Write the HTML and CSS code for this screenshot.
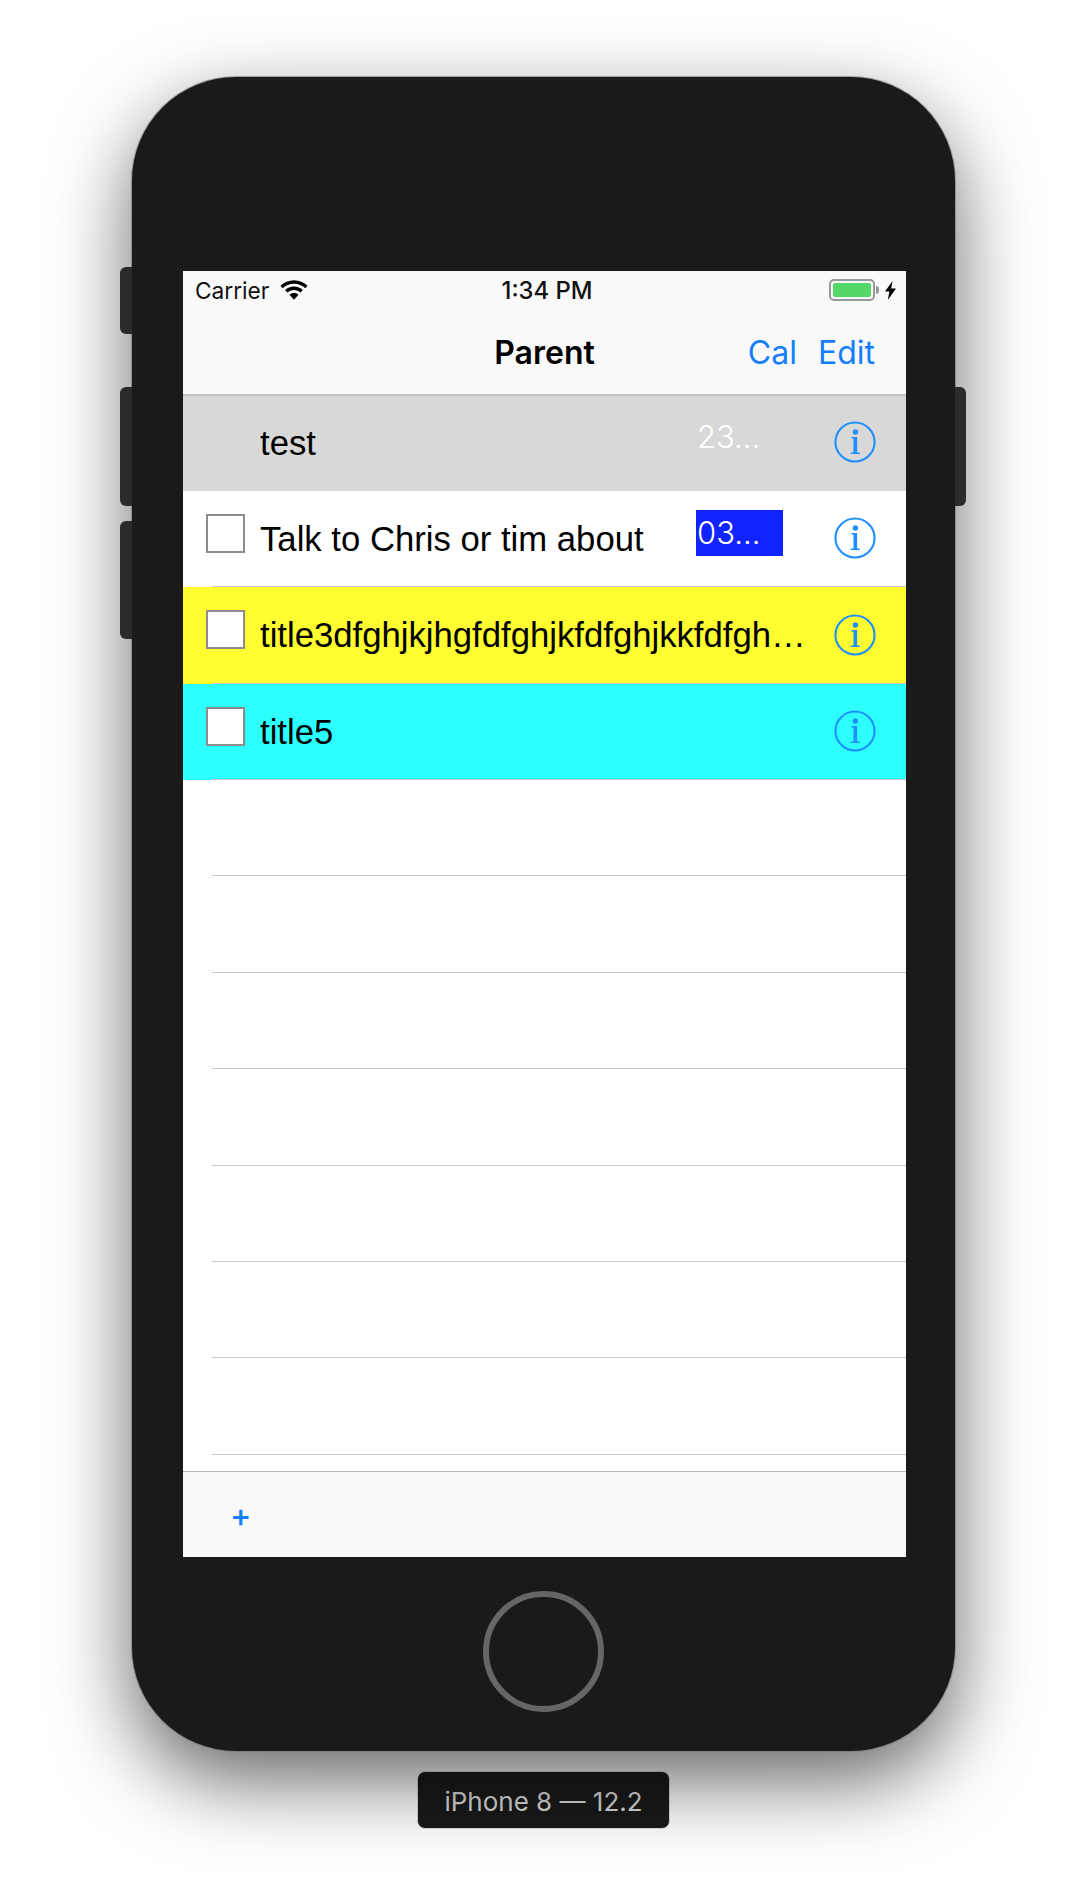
FILE: index.html
```html
<!DOCTYPE html>
<html lang="en">
<head>
    <meta charset="UTF-8">
    <title>iPhone 8 — 12.2</title>
    <link rel="stylesheet" href="styles.css">
</head>
<body>
    <div class="phone">
        <span class="side vol-mute"></span>
        <span class="side vol-up"></span>
        <span class="side vol-down"></span>
        <span class="side power"></span>

        <div class="screen">
            <div class="status">
                <div class="status-left">
                    <span>Carrier</span>
                    <svg class="wifi" width="28" height="20" viewBox="0 0 27 19">
                        <path d="M13.5 0C8.4 0 3.9 2 .4 5.3l2.2 2.4C5.500 5 9.300 3.400 13.500 3.400S21.500 5 24.400 7.700l2.200-2.400C23.100 2 18.600 0 13.500 0z"/>
                        <path d="M13.500 6.200c-3.300 0-6.300 1.300-8.600 3.400l2.300 2.400c1.700-1.500 3.900-2.500 6.300-2.500s4.600 1 6.300 2.500l2.300-2.400c-2.300-2.100-5.300-3.400-8.600-3.400z"/>
                        <path d="M13.500 12.400c-1.700 0-3.200.6-4.300 1.700l4.300 4.700 4.300-4.700c-1.100-1.100-2.600-1.700-4.300-1.700z"/>
                    </svg>
                </div>
                <div class="time">1:34 PM</div>
                <div class="status-right">
                    <span class="battery"><span class="battery-fill"></span></span>
                    <span class="battery-nub"></span>
                    <svg class="bolt" width="11" height="19" viewBox="0 0 11 19">
                        <path d="M7.500 0L0 10.500h4.400L2.800 19 11 7.500H6.200z"/>
                    </svg>
                </div>
            </div>

            <div class="nav">
                <div></div>
                <div class="nav-title">Parent</div>
                <div class="nav-actions">
                    <span>Cal</span>
                    <span>Edit</span>
                </div>
            </div>

            <div class="list">
                <div class="row row-grey">
                    <div class="row-body">
                        <span class="check check-none"></span>
                        <span class="title">test</span>
                        <span class="date">23...</span>
                        <svg class="info" width="42" height="42" viewBox="0 0 44 44">
                            <circle cx="22" cy="22" r="20.500"/>
                            <circle class="info-i" cx="22.400" cy="11.500" r="2.800"/>
                            <path class="info-i" d="M18.300 16.800h5.900V33h2.800v1.500H17.500V33h2.900V18.300h-2.100z"/>
                        </svg>
                    </div>
                </div>
                <div class="row">
                    <div class="row-body">
                        <span class="check"></span>
                        <span class="title">Talk to Chris or tim about</span>
                        <span class="date date-blue">03...</span>
                        <svg class="info" width="42" height="42" viewBox="0 0 44 44">
                            <circle cx="22" cy="22" r="20.500"/>
                            <circle class="info-i" cx="22.400" cy="11.500" r="2.800"/>
                            <path class="info-i" d="M18.300 16.800h5.900V33h2.800v1.500H17.500V33h2.900V18.300h-2.100z"/>
                        </svg>
                    </div>
                </div>
                <div class="row row-yellow">
                    <div class="row-body">
                        <span class="check"></span>
                        <span class="title">title3dfghjkjhgfdfghjkfdfghjkkfdfgh…</span>
                        <svg class="info" width="42" height="42" viewBox="0 0 44 44">
                            <circle cx="22" cy="22" r="20.500"/>
                            <circle class="info-i" cx="22.400" cy="11.500" r="2.800"/>
                            <path class="info-i" d="M18.300 16.800h5.900V33h2.800v1.500H17.500V33h2.900V18.300h-2.100z"/>
                        </svg>
                    </div>
                </div>
                <div class="row row-cyan">
                    <div class="row-body">
                        <span class="check"></span>
                        <span class="title">title5</span>
                        <svg class="info" width="42" height="42" viewBox="0 0 44 44">
                            <circle cx="22" cy="22" r="20.500"/>
                            <circle class="info-i" cx="22.400" cy="11.500" r="2.800"/>
                            <path class="info-i" d="M18.300 16.800h5.900V33h2.800v1.500H17.500V33h2.900V18.300h-2.100z"/>
                        </svg>
                    </div>
                </div>
                <div class="row"><div class="row-body"></div></div>
                <div class="row"><div class="row-body"></div></div>
                <div class="row"><div class="row-body"></div></div>
                <div class="row"><div class="row-body"></div></div>
                <div class="row"><div class="row-body"></div></div>
                <div class="row"><div class="row-body"></div></div>
                <div class="row"><div class="row-body"></div></div>
            </div>

            <div class="toolbar">
                <span class="add">+</span>
            </div>
        </div>

        <div class="home"></div>
    </div>

    <div class="caption">iPhone 8 — 12.2</div>
</body>
</html>
```

FILE: styles.css
```css
html {
    background: #ffffff;
}
body {
    width: 1088px;
    height: 1900px;
    margin: 0;
    overflow: hidden;
    padding-top: 77px;
    box-sizing: border-box;
    font-family: Inter, "Liberation Sans", sans-serif;
}

/* device */
.phone {
    position: relative;
    box-sizing: border-box;
    width: 823px;
    height: 1674px;
    margin-left: 132px;
    padding: 194px 49px 0 51px;
    background: #1a1a1a;
    border-radius: 104px;
    box-shadow: 0 0 0 1px #77777799, 0 30px 80px rgba(0, 0, 0, 0.6);
}
.side {
    position: absolute;
    width: 12px;
    background: #2b2b2b;
}
.vol-mute { left: -12px; top: 190px; height: 67px; border-radius: 6px 0 0 6px; }
.vol-up { left: -12px; top: 310px; height: 119px; border-radius: 6px 0 0 6px; }
.vol-down { left: -12px; top: 444px; height: 118px; border-radius: 6px 0 0 6px; }
.power { right: -11px; top: 310px; width: 11px; height: 119px; border-radius: 0 6px 6px 0; }

.screen {
    display: flex;
    flex-direction: column;
    height: 1286px;
    background: #ffffff;
}

/* status bar */
.status {
    flex: none;
    display: grid;
    grid-template-columns: minmax(0, 1fr) auto minmax(0, 1fr);
    align-items: center;
    height: 38.6px;
    padding: 0 10px 0 12px;
    background: #f9f9f9;
    color: #111111;
    font-size: 22.7px;
}
.status-left {
    display: flex;
    align-items: center;
    gap: 11px;
}
.wifi, .bolt {
    fill: #000000;
}
.time {
    margin-left: 3px;
    font-size: 23.8px;
    font-weight: 500;
}
.status-right {
    display: flex;
    align-items: center;
    justify-content: flex-end;
}
.battery {
    box-sizing: border-box;
    width: 46px;
    height: 22px;
    padding: 2px;
    border: 2px solid #999999;
    border-radius: 5px;
}
.battery-fill {
    display: block;
    height: 100%;
    background: #53d769;
    border-radius: 2px;
}
.battery-nub {
    width: 3px;
    height: 8px;
    margin: 0 6px 0 1px;
    background: #999999;
    border-radius: 0 3px 3px 0;
}

/* nav bar */
.nav {
    position: relative;
    flex: none;
    box-sizing: border-box;
    display: grid;
    grid-template-columns: minmax(0, 1fr) auto minmax(0, 1fr);
    align-items: center;
    height: 86.5px;
    margin-bottom: -1.7px;
    padding-top: 2px;
    background: #f9f9f9;
    border-bottom: 2px solid #c4c4c4;
    font-size: 32px;
}
.nav-title {
    font-weight: 600;
    color: #000000;
}
.nav-actions {
    display: flex;
    justify-content: flex-end;
    gap: 21px;
    margin-right: 31px;
    color: #147efb;
}

/* rows */
.list {
    flex: 1;
    overflow: hidden;
}
.row {
    height: 96.4px;
    overflow: hidden;
}
.row-grey { background: #d8d8d8; }
.row-yellow { background: #fffc30; }
.row-cyan { background: #2dffff; }
.row-body {
    box-sizing: border-box;
    display: flex;
    align-items: center;
    height: 100%;
    margin-left: 29px;
    padding-right: 30px;
    border-bottom: 1px solid #c8c8cc;
}
.row-grey .row-body {
    border-bottom-color: #d8d8d8;
}
.check {
    flex: none;
    box-sizing: border-box;
    width: 39px;
    height: 39px;
    margin: 0 15px 10px -6px;
    background: #ffffff;
    border: 2px solid #8c8c8c;
}
.check-none {
    background: none;
    border: none;
}
.title {
    flex: 1;
    min-width: 0;
    padding-top: 2px;
    white-space: nowrap;
    overflow: hidden;
    font-family: "Liberation Sans", Arial, sans-serif;
    font-size: 34.7px;
    color: #000000;
}
.date {
    flex: none;
    box-sizing: border-box;
    width: 87px;
    height: 46px;
    margin: 0 51px 10px 0;
    padding-left: 1px;
    font-size: 31px;
    font-weight: 350;
    line-height: 46px;
    color: #ffffff;
}
.date-blue {
    background: #1123ff;
}
.info {
    flex: none;
    margin-left: auto;
    fill: none;
    stroke: #1f8fff;
    stroke-width: 2.200;
}
.info .info-i {
    fill: #1f8fff;
    stroke: none;
}

/* toolbar */
.toolbar {
    flex: none;
    box-sizing: border-box;
    display: flex;
    align-items: center;
    height: 86px;
    padding: 2px 0 0 47px;
    background: #f9f9f9;
    border-top: 1px solid #b8b8b8;
}
.add {
    font-size: 32px;
    font-weight: 500;
    color: #147efb;
}

/* home button */
.home {
    box-sizing: border-box;
    width: 121px;
    height: 121px;
    margin: 34px 0 0 300px;
    border: 6px solid #666666;
    border-radius: 50%;
}

.caption {
    box-sizing: border-box;
    width: 253px;
    height: 58px;
    margin: 20px 0 0 417px;
    background: #1a1a1a;
    border: 1px solid #dddddd;
    border-radius: 8px;
    color: #dddddd;
    font-size: 26px;
    line-height: 59px;
    text-align: center;
}
```
